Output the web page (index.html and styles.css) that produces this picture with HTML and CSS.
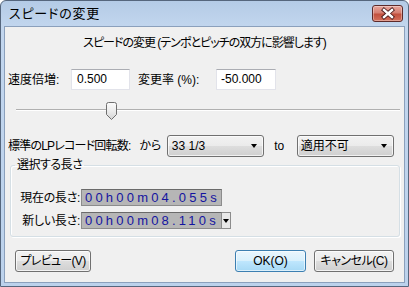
FILE: index.html
```html
<!DOCTYPE html>
<html lang="ja">
<head>
<meta charset="utf-8">
<link rel="stylesheet" href="styles.css">
</head>
<body>
<div class="window">
  <div class="titlebar">
    <span class="title">スピードの変更</span>
    <div class="close">
      <svg width="30" height="16" viewBox="0 0 30 16">
        <path d="M11 4 L19 11 M19 4 L11 11" stroke="#4a1a1a" stroke-width="4.2" stroke-linecap="square" fill="none"/>
        <path d="M11 4 L19 11 M19 4 L11 11" stroke="#ffffff" stroke-width="2.4" stroke-linecap="square" fill="none"/>
      </svg>
    </div>
  </div>
  <div class="client">
    <div class="heading">スピードの変更 (テンポとピッチの双方に影響します)</div>
    <div class="row row1">
      <span class="lbl lbl-speed">速度倍増:</span>
      <div class="input in-speed">0.500</div>
      <span class="lbl lbl-pct">変更率 (%):</span>
      <div class="input in-pct">-50.000</div>
    </div>
    <div class="slider">
      <div class="track"></div>
      <svg class="thumb" style="left:98px" width="11" height="18" viewBox="0 0 11 18">
        <defs>
          <linearGradient id="tg" x1="0" y1="0" x2="0" y2="1">
            <stop offset="0" stop-color="#fbfbfb"/>
            <stop offset="0.5" stop-color="#ececec"/>
            <stop offset="1" stop-color="#d4d4d4"/>
          </linearGradient>
        </defs>
        <path d="M0.5 2.5 Q0.5 0.5 2.5 0.5 H8.5 Q10.5 0.5 10.5 2.5 V12.5 L5.5 17.5 L0.5 12.5 Z" fill="url(#tg)" stroke="#6f6f6f"/>
      </svg>
    </div>
    <div class="row row2">
      <span class="lbl lbl-lp">標準のLPレコード回転数:</span>
      <span class="lbl lbl-from">から</span>
      <div class="combo combo1"><span>33 1/3</span><i class="arrow"></i></div>
      <span class="lbl lbl-to">to</span>
      <div class="combo combo2"><span>適用不可</span><i class="arrow"></i></div>
    </div>
    <fieldset class="group">
      <legend>選択する長さ</legend>
      <div class="trow trow1">
        <span class="tlbl">現在の長さ:</span>
        <div class="tbox">00h00m04.055s</div>
      </div>
      <div class="trow trow2">
        <span class="tlbl">新しい長さ:</span>
        <div class="tbox">00h00m08.110s</div>
        <div class="tdrop"><i class="arrow"></i></div>
      </div>
    </fieldset>
    <div class="buttons">
      <div class="btn btn-preview">プレビュー(V)</div>
      <div class="spacer"></div>
      <div class="btn btn-default btn-ok">OK(O)</div>
      <div class="btn btn-cancel">キャンセル(C)</div>
    </div>
  </div>
</div>
</body>
</html>
```

FILE: styles.css
```css
* { box-sizing: border-box; }
html, body { margin: 0; padding: 0; }
body {
  width: 409px;
  height: 287px;
  overflow: hidden;
  font-family: "Liberation Sans", "Noto Sans CJK JP", sans-serif;
  font-size: 12px;
  font-feature-settings: "palt";
  color: #000;
}
.window {
  width: 409px;
  height: 287px;
  border: 1px solid #55667d;
  border-radius: 6px 6px 0 0;
  background: linear-gradient(to bottom, #b4cbe6 0px, #c2d6ee 26px, #bcd2ec 100%);
  padding: 0 3px 3px 3px;
  display: flex;
  flex-direction: column;
}
.titlebar {
  height: 25px;
  display: flex;
  align-items: center;
  flex: none;
}
.title {
  margin-left: 5px;
  font-size: 13px;
  letter-spacing: 0.8px;
  line-height: 16px;
  color: #000;
  margin-top: 1px;
}
.close {
  margin-left: auto;
  margin-right: 2px;
  width: 31px;
  height: 17px;
  border: 1px solid #5d2a2a;
  border-radius: 3px;
  background: linear-gradient(to bottom, #e8a69c 0%, #d67f72 45%, #c2503e 55%, #d5705c 100%);
  box-shadow: inset 0 0 0 1px rgba(255,255,255,0.35);
  display: flex;
  align-items: center;
  justify-content: center;
  overflow: hidden;
}
.close svg { display: block; flex: none; }
.client {
  flex: 1;
  background: #f0f0f0;
  border: 1px solid #8ba0bc;
  padding: 0 10px 0 3px;
  display: flex;
  flex-direction: column;
}
.heading {
  margin-top: 8px;
  height: 16px;
  line-height: 16px;
  text-align: center;
  padding-left: 7px;
  letter-spacing: -1px;
  white-space: nowrap;
}
.row {
  display: flex;
  align-items: center;
}
.row1 { margin-top: 18px; height: 21px; }
.lbl { line-height: 16px; white-space: nowrap; }
.lbl-speed { width: 63px; }
.input {
  height: 21px;
  background: #fff;
  border: 1px solid #e2e3ea;
  border-top-color: #abadb3;
  line-height: 19px;
  padding-left: 5px;
}
.in-speed { width: 59px; }
.lbl-pct { margin-left: 8px; width: 78px; }
.in-pct { width: 60px; padding-left: 4px; }
.slider {
  position: relative;
  margin-top: 12px;
  height: 19px;
}
.track {
  position: absolute;
  left: 8px;
  width: 384px;
  top: 7px;
  height: 2px;
  border-top: 1px solid #b0b0b0;
  border-bottom: 1px solid #ffffff;
  background: #e7eaea;
}
.thumb {
  position: absolute;
  top: 0px;
  display: block;
}
.row2 { margin-top: 14px; height: 22px; }
.lbl-lp { width: 134px; letter-spacing: -0.8px; }
.lbl-from { width: 28px; }
.combo {
  height: 22px;
  border: 1px solid #707070;
  border-radius: 3px;
  background: linear-gradient(to bottom, #f2f2f2 0%, #ebebeb 48%, #dddddd 52%, #cfcfcf 100%);
  box-shadow: inset 0 0 0 1px rgba(255,255,255,0.7);
  display: flex;
  align-items: center;
  padding: 0 6px 0 4px;
  line-height: 16px;
}
.combo span { flex: 1; }
.combo1 { width: 99px; }
.lbl-to { margin-left: 10px; width: 23px; }
.combo2 { width: 99px; padding-left: 3px; }
.arrow {
  display: block;
  width: 0;
  height: 0;
  border-left: 3.5px solid transparent;
  border-right: 3.5px solid transparent;
  border-top: 4px solid #000;
}
.group {
  margin: 0 0 0 2px;
  width: 390px;
  padding: 0 0 7px 0;
  border: 1px solid #d5dfe5;
  border-radius: 3px;
  box-shadow: inset 1px 1px 0 #fff, 1px 1px 0 #fff;
  min-width: 0;
}
.group legend {
  margin-left: 4px;
  padding: 0 2px;
  line-height: 16px;
  font-size: 12px;
  letter-spacing: -0.5px;
}
.trow {
  display: flex;
  align-items: center;
  height: 17px;
}
.trow1 { margin-top: 16px; }
.trow2 { margin-top: 6px; }
.tlbl {
  width: 70px;
  text-align: right;
  padding-right: 1px;
  line-height: 16px;
  white-space: nowrap;
  letter-spacing: -0.3px;
}
.tbox {
  height: 17px;
  width: 141px;
  background: #b6b6b6;
  border: 1px solid #8c8c8c;
  border-top-color: #6a6a6a;
  color: #1414a0;
  font-size: 13px;
  letter-spacing: 3.2px;
  line-height: 15px;
  padding-left: 3px;
  white-space: nowrap;
  overflow: hidden;
}
.tdrop {
  width: 9px;
  height: 17px;
  border: 1px solid #8c8c8c;
  border-left: none;
  background: #e8e8e8;
  display: flex;
  align-items: center;
  justify-content: center;
}
.tdrop .arrow { border-left-width: 3px; border-right-width: 3px; border-top-width: 4px; }
.buttons {
  margin-top: 13px;
  display: flex;
  height: 22px;
  padding-left: 7px;
}
.spacer { flex: 1; }
.btn {
  height: 22px;
  border: 1px solid #707070;
  border-radius: 3px;
  background: linear-gradient(to bottom, #f2f2f2 0%, #ebebeb 48%, #dddddd 52%, #cfcfcf 100%);
  box-shadow: inset 0 0 0 1px rgba(255,255,255,0.75);
  display: flex;
  align-items: center;
  justify-content: center;
  line-height: 16px;
  white-space: nowrap;
}
.btn-preview { width: 76px; letter-spacing: -0.7px; }
.btn-ok { width: 71px; }
.btn-cancel { width: 80px; margin-left: 8px; letter-spacing: -0.5px; }
.btn-default {
  border-color: #3c7fb1;
  background: linear-gradient(to bottom, #eaf6fd 0%, #d9f0fc 48%, #bee6fd 52%, #a7d9f5 100%);
  box-shadow: inset 0 0 0 1px rgba(255,255,255,0.6);
}
```
